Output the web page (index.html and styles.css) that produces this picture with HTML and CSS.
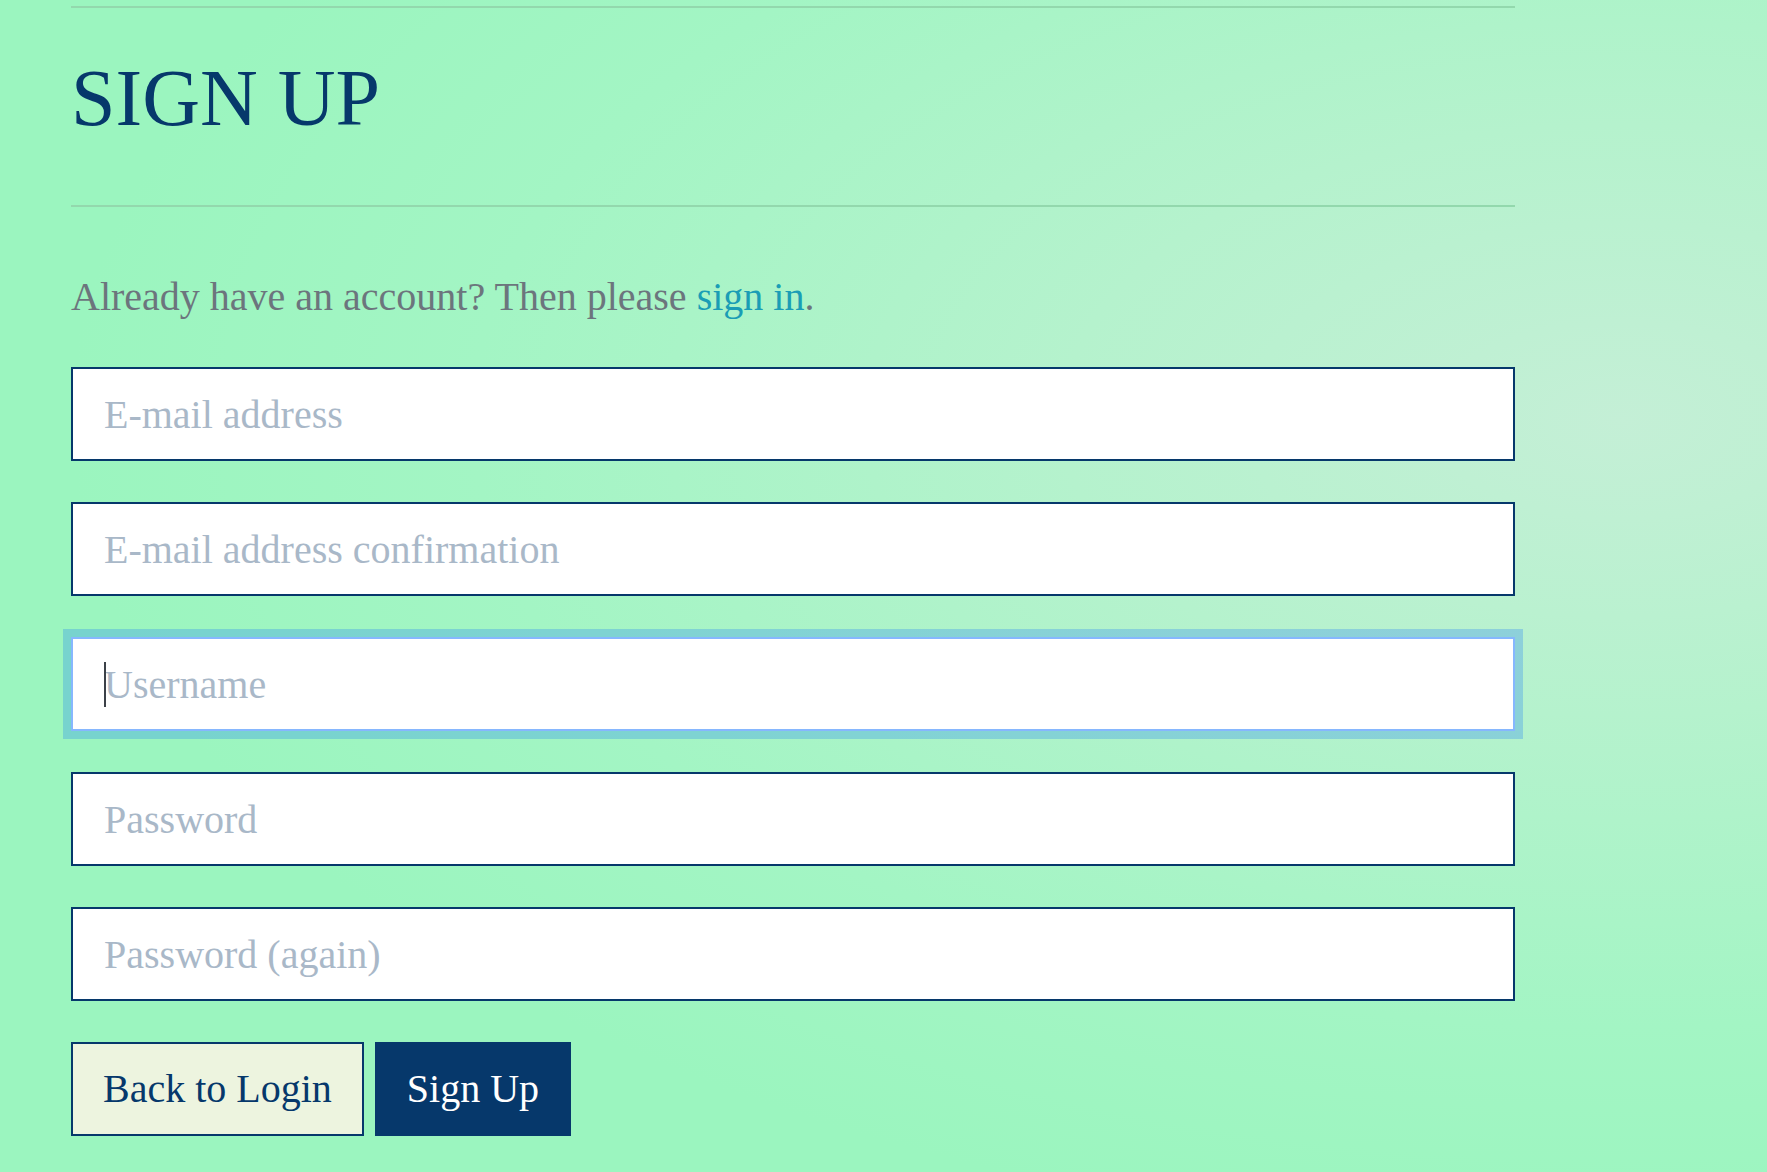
FILE: index.html
```html
<!DOCTYPE html>
<html lang="en">
<head>
<meta charset="utf-8">
<title>Sign Up</title>
<link rel="stylesheet" href="styles.css">
</head>
<body>
<main class="page">
  <hr class="rule">
  <h1 class="title">SIGN UP</h1>
  <hr class="rule rule-lower">
  <p class="lead">Already have an account? Then please <a class="link" href="#">sign in</a>.</p>
  <form class="signup-form">
    <input class="field" type="email" placeholder="E-mail address">
    <input class="field" type="email" placeholder="E-mail address confirmation">
    <div class="field-wrap">
      <input class="field field-focused" type="text" placeholder="Username">
      <span class="caret"></span>
    </div>
    <input class="field" type="password" placeholder="Password">
    <input class="field" type="password" placeholder="Password (again)">
    <div class="actions">
      <button class="btn btn-secondary" type="button">Back to Login</button>
      <button class="btn btn-primary" type="submit">Sign Up</button>
    </div>
  </form>
</main>
</body>
</html>
```
FILE: styles.css
```css
html, body {
  margin: 0;
  padding: 0;
}

body {
  min-height: 100vh;
  font-family: "Liberation Serif", "Times New Roman", serif;
  background-color: #9ef5c0;
  background-image: radial-gradient(ellipse 1550px 820px at 1620px 420px, #c4efd6 0%, #b5f2cd 36%, #a3f5c4 74%, #9bf5bf 100%);
}

.page {
  margin-left: 71px;
  width: 1444px;
  padding-top: 6px;
  padding-bottom: 36px;
}

.rule {
  border: 0;
  height: 2px;
  margin: 0;
  background: #93d8ad;
}

.rule-lower {
  margin-top: 59px;
}

.title {
  margin: 42px 0 0;
  font-size: 80px;
  line-height: 96px;
  font-weight: normal;
  color: #06386b;
}

.lead {
  margin: 66px 0 0;
  font-size: 40px;
  line-height: 48px;
  color: #6c757d;
}

.link {
  color: #1a9db5;
  text-decoration: none;
}

.signup-form {
  margin-top: 46px;
  display: flex;
  flex-direction: column;
  gap: 41px;
}

.field-wrap {
  position: relative;
}

.field {
  display: block;
  box-sizing: border-box;
  width: 100%;
  height: 94px;
  margin: 0;
  padding: 0 31px;
  border: 2px solid #06386b;
  border-radius: 0;
  background: #ffffff;
  font-family: "Liberation Serif", "Times New Roman", serif;
  font-size: 40px;
  line-height: 48px;
  color: #212529;
  outline: none;
}

.field::placeholder {
  color: #a9b8c8;
  opacity: 1;
}

.field-focused {
  border-color: #86b7fe;
  box-shadow: 0 0 0 8px rgba(13, 110, 253, 0.25);
}

.caret {
  position: absolute;
  left: 33px;
  top: 25px;
  width: 2px;
  height: 45px;
  background: #3c4148;
}

.actions {
  display: flex;
  gap: 11px;
}

.btn {
  box-sizing: border-box;
  height: 94px;
  margin: 0;
  padding: 0 30px;
  border: 2px solid #06386b;
  border-radius: 0;
  font-family: "Liberation Serif", "Times New Roman", serif;
  font-size: 40px;
  line-height: 48px;
  cursor: pointer;
}

.btn-secondary {
  background: #edf4df;
  color: #06386b;
}

.btn-primary {
  background: #06386b;
  color: #ffffff;
}
```
